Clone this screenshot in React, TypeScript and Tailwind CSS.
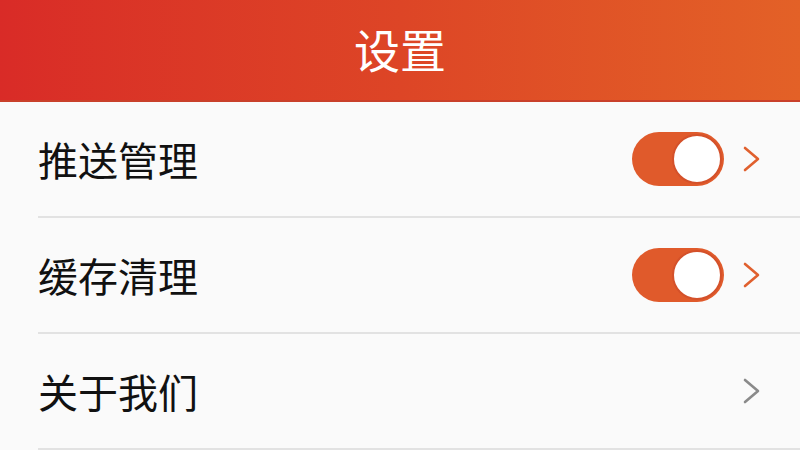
const rows = [
  { label: "推送管理", toggle: true },
  { label: "缓存清理", toggle: true },
  { label: "关于我们", toggle: false },
];

function Chevron({ color }: { color: string }) {
  return (
    <svg width="20" height="28" viewBox="0 0 20 28" fill="none">
      <path d="M3 3 L16 14 L3 25" stroke={color} strokeWidth="2.6" strokeLinecap="round" strokeLinejoin="round" />
    </svg>
  );
}

function Toggle() {
  return (
    <div className="flex h-[54px] w-[92px] items-center justify-end rounded-full bg-[#e05a2b] pr-[2px]">
      <div className="h-[50px] w-[50px] rounded-full border-2 border-[#d4512a] bg-white" />
    </div>
  );
}

export default function App() {
  return (
    <div
      className="h-[450px] w-[800px] overflow-hidden bg-[#fafafa]"
      style={{ fontFamily: '"Noto Sans CJK SC", "Noto Sans", sans-serif' }}
    >
      <div className="flex h-[102px] items-center justify-center border-b-2 border-[#c9402a] bg-gradient-to-r from-[#d92b27] via-[#dd4526] to-[#e36127] pb-[4px]">
        <span className="text-[46px] leading-none text-white">设置</span>
      </div>
      <div className="pl-[38px]">
        {rows.map((r) => (
          <div key={r.label} className="flex h-[116px] items-center border-b-2 border-[#e2e2e2] pr-[38px]">
            <span className="flex-1 text-[40px] leading-none text-[#111]">{r.label}</span>
            {r.toggle && <Toggle />}
            <div className="ml-[18px]">
              <Chevron color={r.toggle ? "#e0602e" : "#8a8a8a"} />
            </div>
          </div>
        ))}
      </div>
    </div>
  );
}
